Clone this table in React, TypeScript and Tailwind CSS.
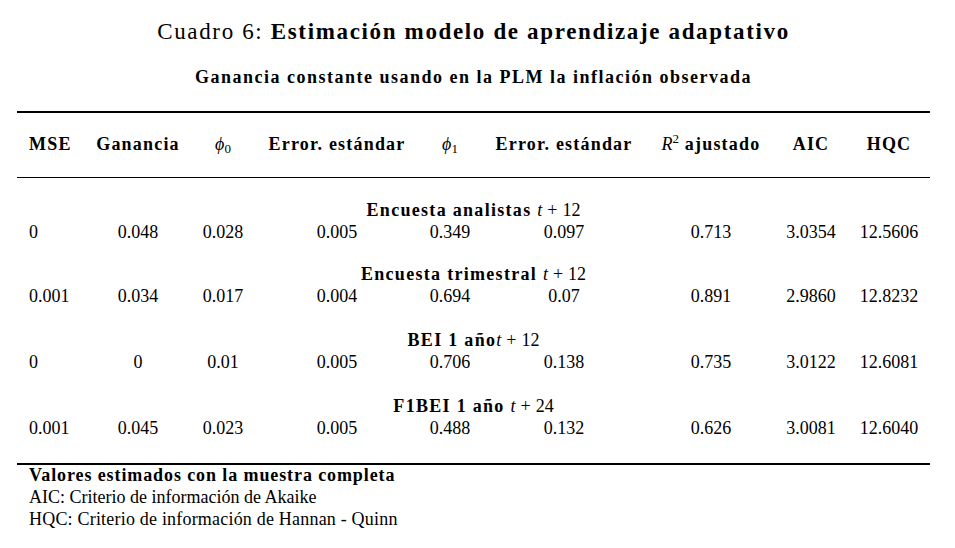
import type { ReactNode } from 'react';

type Row = {
  label: ReactNode;
  values: string[];
};

const cols = 'grid grid-cols-[67px_108px_62px_166px_60px_168px_126px_74px_82px]';

const Phi = ({ sub }: { sub: string }) => (
  <span className="font-normal tracking-normal">
    <i>ϕ</i>
    <sub className="text-[13px] not-italic">{sub}</sub>
  </span>
);

// math-mode "t + n", regular weight with LaTeX-ish spacing round the plus
const T = ({ n }: { n: string }) => (
  <span className="font-normal tracking-normal">
    <i>t</i>
    <span className="mx-[5px]">+</span>
    {n}
  </span>
);

const rows: Row[] = [
  {
    label: (
      <>
        Encuesta analistas <T n="12" />
      </>
    ),
    values: ['0', '0.048', '0.028', '0.005', '0.349', '0.097', '0.713', '3.0354', '12.5606'],
  },
  {
    label: (
      <>
        Encuesta trimestral <T n="12" />
      </>
    ),
    values: ['0.001', '0.034', '0.017', '0.004', '0.694', '0.07', '0.891', '2.9860', '12.8232'],
  },
  {
    label: (
      <>
        BEI 1 año<T n="12" />
      </>
    ),
    values: ['0', '0', '0.01', '0.005', '0.706', '0.138', '0.735', '3.0122', '12.6081'],
  },
  {
    label: (
      <>
        F1BEI 1 año <T n="24" />
      </>
    ),
    values: ['0.001', '0.045', '0.023', '0.005', '0.488', '0.132', '0.626', '3.0081', '12.6040'],
  },
];

const headers: ReactNode[] = [
  'MSE',
  'Ganancia',
  <Phi sub="0" />,
  'Error. estándar',
  <Phi sub="1" />,
  'Error. estándar',
  <>
    <span className="font-normal tracking-normal">
      <i>R</i>
      <sup className="text-[13px]">2</sup>
    </span>{' '}
    ajustado
  </>,
  'AIC',
  'HQC',
];

export default function App() {
  return (
    <div className="w-[955px] h-[548px] bg-white text-black font-['Liberation_Serif',serif] overflow-hidden">
      <div className="ml-[17px] w-[913px] flex flex-col">
        <div className="pt-[18px] text-center text-[23px] leading-[28px] tracking-[1.65px]">
          Cuadro 6: <b>Estimación modelo de aprendizaje adaptativo</b>
        </div>
        <div className="mt-[19px] text-center text-[18px] leading-[24px] font-bold tracking-[1.5px]">
          Ganancia constante usando en la PLM la inflación observada
        </div>

        <div className="mt-[22px] h-[1.5px] bg-black" />

        <div className={`${cols} pt-[19px] pb-[21px] text-[18px] leading-[24px] font-bold tracking-[1.2px]`}>
          {headers.map((h, i) => (
            <div key={i} className={i === 0 ? 'pl-[12px] text-left' : 'text-center'}>
              {h}
            </div>
          ))}
        </div>

        <div className="h-[1.5px] bg-black" />

        <div className="flex flex-col pt-[21px] gap-[20px] text-[18px] leading-[22px]">
          {rows.map((r, i) => (
            <div key={i} className={i < 2 ? '' : 'mt-[2px]'}>
              <div className="text-center font-bold tracking-[1.3px]">{r.label}</div>
              <div className={cols}>
                {r.values.map((v, j) => (
                  <div key={j} className={j === 0 ? 'pl-[12px] text-left' : 'text-center'}>
                    {v}
                  </div>
                ))}
              </div>
            </div>
          ))}
        </div>

        <div className="mt-[24px] h-[1.5px] bg-black" />

        <div className="pl-[12px] text-[18px] leading-[22px]">
          <div className="-mt-[1px] font-bold tracking-[0.9px]">Valores estimados con la muestra completa</div>
          <div>AIC: Criterio de información de Akaike</div>
          <div className="tracking-[0.2px]">HQC: Criterio de información de Hannan - Quinn</div>
        </div>
      </div>
    </div>
  );
}
